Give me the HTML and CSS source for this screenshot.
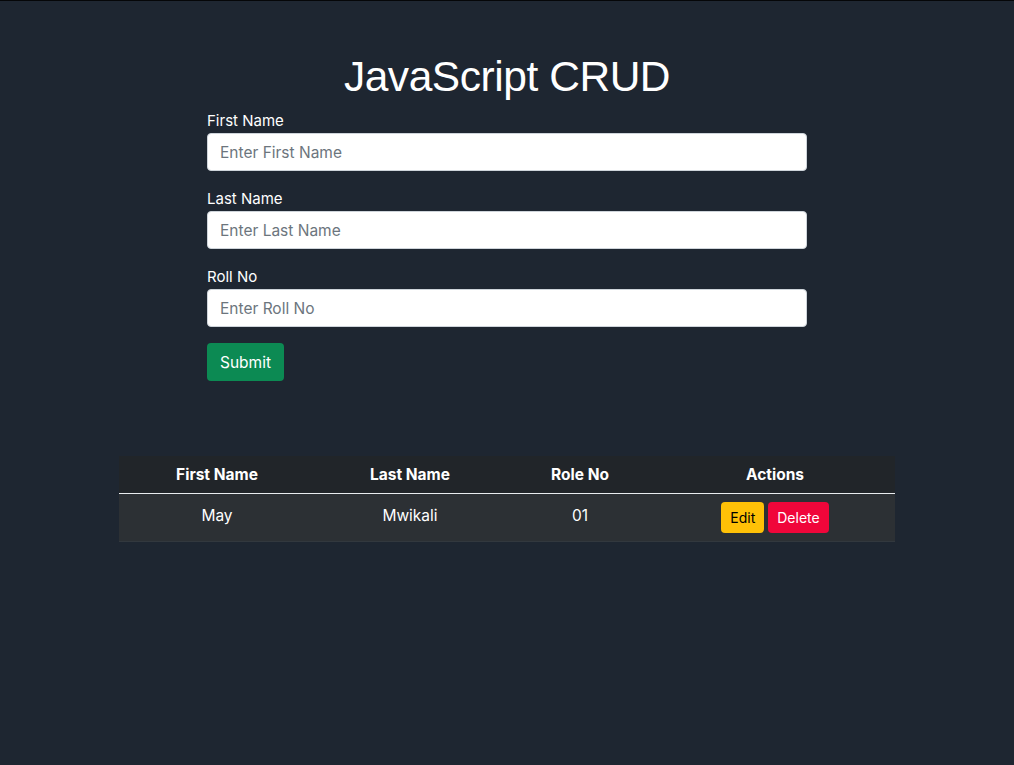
FILE: index.html
```html
<!DOCTYPE html>
<html lang="en">
<head>
<meta charset="utf-8">
<title>JavaScript CRUD</title>
<link rel="stylesheet" href="styles.css">
</head>
<body>
<div class="page">
  <h1 class="title">JavaScript CRUD</h1>
  <form class="form">
    <div class="group">
      <label class="label">First Name</label>
      <input class="input" type="text" placeholder="Enter First Name">
    </div>
    <div class="group">
      <label class="label">Last Name</label>
      <input class="input" type="text" placeholder="Enter Last Name">
    </div>
    <div class="group">
      <label class="label">Roll No</label>
      <input class="input" type="text" placeholder="Enter Roll No">
    </div>
    <button class="btn btn-submit" type="button">Submit</button>
  </form>
  <table class="table">
    <thead>
      <tr>
        <th class="c1">First Name</th>
        <th class="c2">Last Name</th>
        <th class="c3">Role No</th>
        <th class="c4">Actions</th>
      </tr>
    </thead>
    <tbody>
      <tr>
        <td>May</td>
        <td>Mwikali</td>
        <td>01</td>
        <td class="actions"><button class="btn btn-sm btn-edit" type="button">Edit</button><button class="btn btn-sm btn-delete" type="button">Delete</button></td>
      </tr>
    </tbody>
  </table>
</div>
</body>
</html>
```

FILE: styles.css
```css
* { box-sizing: border-box; }
html, body {
  margin: 0;
  padding: 0;
  height: 100%;
}
body {
  background: #1e2631;
  border-top: 1px solid #050608;
  color: #fff;
  font-family: Inter, "Liberation Sans", sans-serif;
  font-size: 16px;
  line-height: 1.5;
}
.page {
  display: flex;
  flex-direction: column;
  align-items: center;
  padding-top: 50px;
}
.title {
  margin: 0 0 6px;
  font-family: "Liberation Sans", Arial, sans-serif;
  font-weight: 400;
  font-size: 42.5px;
  line-height: 52px;
  letter-spacing: -0.45px;
}
.form {
  width: 600px;
  display: flex;
  flex-direction: column;
}
.group {
  display: flex;
  flex-direction: column;
  margin-bottom: 16px;
}
.label {
  font-size: 15px;
  line-height: 24px;
  margin-bottom: 0;
}
.input {
  height: 38px;
  border: 1px solid #ced4da;
  border-radius: 4px;
  background: #fff;
  padding: 6px 12px;
  font-family: inherit;
  font-size: 15.5px;
  color: #212529;
}
.input::placeholder { color: #6c757d; }
.btn {
  border: 0;
  border-radius: 4px;
  font-family: inherit;
  cursor: pointer;
}
.btn-submit {
  align-self: flex-start;
  width: 77px;
  height: 38px;
  background: #0c8a53;
  color: #fff;
  font-size: 15.5px;
  padding: 0;
}
.table {
  margin-top: 75px;
  width: 776px;
  border-collapse: collapse;
  text-align: center;
}
.table th {
  background: #212529;
  color: #fff;
  font-weight: 700;
  font-size: 15.5px;
  height: 37px;
  padding: 0 8px;
  border-bottom: 1px solid #e9ecef;
}
.c1 { width: 196px; }
.c2 { width: 190px; }
.c3 { width: 150px; }
.c4 { width: 240px; }
.table td {
  background: #2c3034;
  font-size: 15.5px;
  height: 48px;
  padding: 0 8px 3px;
  border-bottom: 1px solid #32383e;
}
.table td.actions {
  padding: 0 8px;
}
.btn-sm {
  height: 31px;
  padding: 0 9px;
  font-size: 14px;
  vertical-align: middle;
}
.btn-edit {
  background: #ffc107;
  color: #000;
  margin-right: 4px;
}
.btn-delete {
  background: #f0063a;
  color: #fff;
}
```
